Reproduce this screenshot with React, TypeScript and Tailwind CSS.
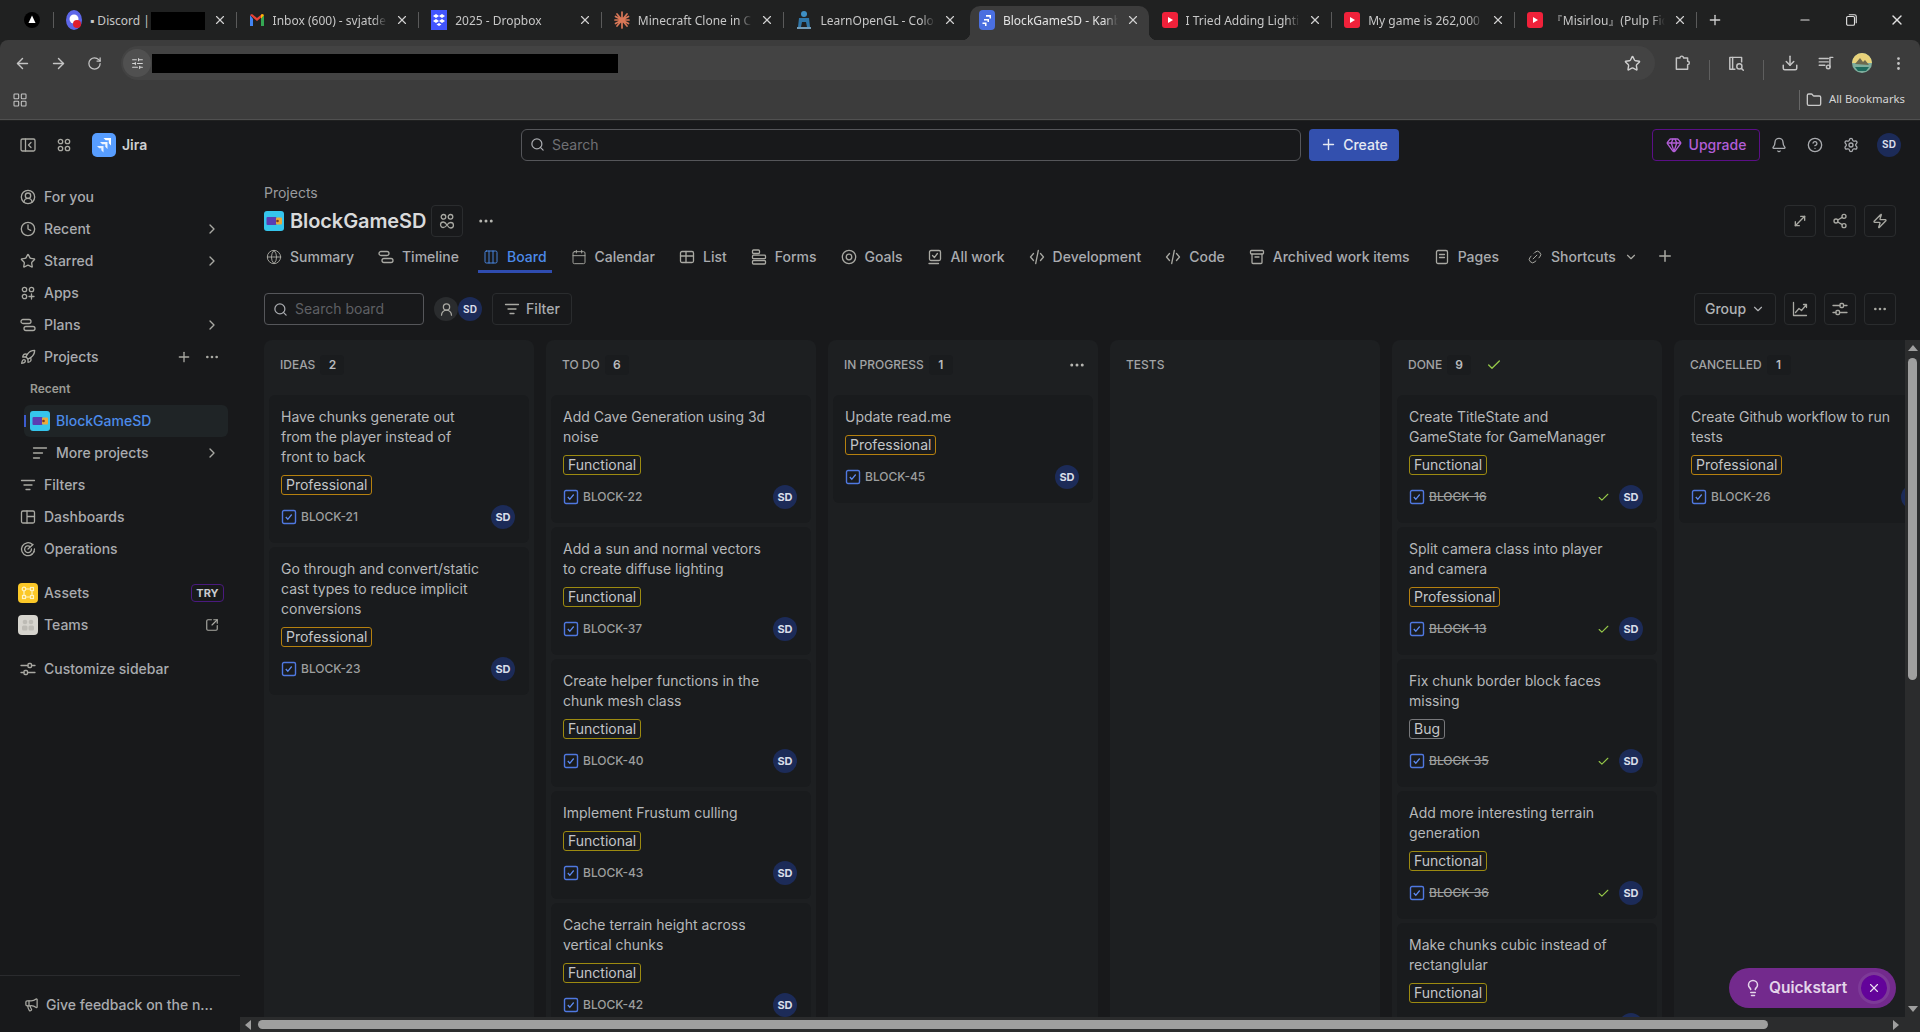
import type { ReactNode } from "react";
import {
  ArrowLeft,
  ArrowRight,
  Bell,
  Calendar,
  Check,
  ChevronDown,
  ChevronRight,
  CircleHelp,
  CircleUserRound,
  Clock,
  Columns3,
  Download,
  Ellipsis,
  EllipsisVertical,
  Folder,
  Gem,
  Globe,
  LayoutGrid,
  Lightbulb,
  Link2,
  Megaphone,
  Minus,
  MoveDiagonal,
  Plus,
  RotateCw,
  Rocket,
  Search,
  Settings,
  Share2,
  SlidersHorizontal,
  SquareArrowOutUpRight,
  Star,
  UserRound,
  X,
  Zap,
} from "lucide-react";

function Ico({ children, size = 16 }: { children: ReactNode; size?: number }) {
  return (
    <svg width={size} height={size} viewBox="0 0 16 16" fill="none" stroke="currentColor" strokeWidth="1.3" strokeLinecap="round" strokeLinejoin="round" className="shrink-0">
      {children}
    </svg>
  );
}

const PanelToggle = () => (
  <Ico>
    <rect x="1" y="2" width="14" height="12" rx="1.5" />
    <path d="M5.5 2v12M11 5.5 8.5 8l2.5 2.5" />
  </Ico>
);
const Dots4 = () => (
  <Ico>
    <circle cx="4.5" cy="4.5" r="2.2" />
    <circle cx="11.5" cy="4.5" r="2.2" />
    <circle cx="4.5" cy="11.5" r="2.2" />
    <circle cx="11.5" cy="11.5" r="2.2" />
  </Ico>
);
const AppsPlus = () => (
  <Ico>
    <circle cx="4.5" cy="4.5" r="2.2" />
    <circle cx="11.5" cy="4.5" r="2.2" />
    <circle cx="4.5" cy="11.5" r="2.2" />
    <path d="M11.5 9v5M9 11.5h5" />
  </Ico>
);
const Pills = () => (
  <Ico>
    <rect x="1" y="2.5" width="10" height="4" rx="2" />
    <rect x="4" y="9.5" width="11" height="4" rx="2" />
  </Ico>
);
const FilterLines = () => (
  <Ico>
    <path d="M1.5 3.5h13M4 8h8M6 12.5h4" />
  </Ico>
);
const MoreLines = () => (
  <Ico>
    <path d="M1.5 3h13M1.5 8h9M1.5 13h6" />
  </Ico>
);
const DashIcon = () => (
  <Ico>
    <rect x="1.5" y="2" width="13" height="12" rx="1.5" />
    <path d="M7 2v12M7 7.5h7.5" />
  </Ico>
);
const OpsIcon = () => (
  <Ico>
    <path d="M12.5 3.5A6.5 6.5 0 1 0 14.5 8" />
    <path d="M10 5.5A3.4 3.4 0 1 0 11.4 8" />
    <path d="M8 8l5-4.5" />
    <path d="M14 10.5l-.5 1M12 13l-.7.6" />
  </Ico>
);
const Tune = () => (
  <Ico>
    <path d="M1 4.5h7M12 4.5h3M1 11.5h3M8 11.5h7" />
    <rect x="8" y="2.5" width="3.5" height="4" rx="1" />
    <rect x="4" y="9.5" width="3.5" height="4" rx="1" />
  </Ico>
);
const TeamIcon = () => (
  <Ico>
    <circle cx="4.5" cy="3.8" r="2.3" />
    <circle cx="11.5" cy="3.8" r="2.3" />
    <path d="M8 12c-1-1.500-2-3-3.700-3a2.500 2.500 0 0 0 0 5.500c1.700 0 2.700-1 3.700-2.500s2-2.500 3.700-2.500a2.500 2.500 0 0 1 0 5.500c-1.700 0-2.700-1.500-3.700-3" />
  </Ico>
);
const ListIcon = () => (
  <Ico>
    <rect x="1.5" y="2.5" width="13" height="11" rx="1.5" />
    <path d="M1.5 7h13M7 2.5v11" />
  </Ico>
);
const FormsIcon = () => (
  <Ico>
    <rect x="1.5" y="1" width="7" height="3.5" rx="1" />
    <rect x="1.5" y="6.2" width="13" height="3.5" rx="1" />
    <rect x="1.5" y="11.5" width="13" height="3.5" rx="1" />
  </Ico>
);
const GoalIcon = () => (
  <Ico>
    <circle cx="8" cy="8" r="6.7" />
    <circle cx="8" cy="8" r="2.8" />
  </Ico>
);
const AllWorkIcon = () => (
  <Ico>
    <rect x="2.5" y="1.5" width="11" height="10" rx="1.5" />
    <path d="M5.5 6.5 7.4 8.5l3-4M2 14.5h9.5" />
  </Ico>
);
const CodeIcon = () => (
  <Ico>
    <path d="M4.5 4.5 1.5 8l3 3.5M11.5 4.5l3 3.5-3 3.5M9.3 1.5l-2.6 13" />
  </Ico>
);
const ArchiveIcon = () => (
  <Ico>
    <rect x="1.5" y="1.5" width="13" height="3.5" rx="1" />
    <path d="M3 5v8.5A1 1 0 0 0 4 14.5h8a1 1 0 0 0 1-1V5M6 8h4" />
  </Ico>
);
const PagesIcon = () => (
  <Ico>
    <rect x="2.5" y="1.5" width="11" height="13" rx="1.5" />
    <path d="M5.5 5.5h5M5.5 8.5h5" />
  </Ico>
);
const GrowthIcon = () => (
  <Ico>
    <path d="M1.5 1.5v13h13M3.5 11.5 7 7.5l2.5 2 5-6M11.5 3.5h3v3" />
  </Ico>
);
const ExtIcon = () => (
  <Ico size={18}>
    <path d="M3 3.5h3.2a1.6 1.6 0 0 1 3.2 0H13v3a1.5 1.5 0 0 1 0 3v4H3z" />
  </Ico>
);
const SidePanelIcon = () => (
  <Ico size={18}>
    <path d="M13 7V3H2.5v10.5H7" />
    <path d="M5 3v10.5" />
    <circle cx="11" cy="11" r="2.3" />
    <path d="m13 13 1.5 1.5" />
  </Ico>
);
const MusicIcon = () => (
  <Ico size={18}>
    <path d="M2 4h8M2 7h8M2 10h5M14 3h-2.5v8.5" />
    <circle cx="10" cy="11.5" r="1.6" />
  </Ico>
);
const RestoreIcon = () => (
  <Ico size={14}>
    <rect x="3" y="4" width="9" height="10" rx="1.5" />
    <path d="M6 2h6a2 2 0 0 1 2 2v7" />
  </Ico>
);

function JiraMark({ size = 24 }: { size?: number }) {
  return (
    <svg width={size} height={size} viewBox="0 0 24 24" className="shrink-0">
      <rect width="24" height="24" rx="5" fill="#579dff" />
      <path d="M11.500 5H19v7.500L16.800 10.300V7.200H13.700z" fill="#fff" />
      <path d="M8 9h7.500v7l-2.200-2.200v-2.600h-3.100z" fill="#fff" fillOpacity="0.9" />
      <path d="M5 13h6.500v6.500L9.300 17.300v-2.100H7.200z" fill="#fff" fillOpacity="0.85" />
    </svg>
  );
}

function ProjectMark({ size = 20 }: { size?: number }) {
  return (
    <svg width={size} height={size} viewBox="0 0 20 20" className="shrink-0">
      <rect width="20" height="20" rx="3" fill="#35c5ec" />
      <rect x="2.5" y="6" width="10" height="8" rx="1" fill="#5a3db3" />
      <rect x="12" y="6.5" width="6" height="7" rx="1" fill="#e9a93c" />
      <circle cx="13.5" cy="10" r="1.3" fill="#7a3b20" />
    </svg>
  );
}

function YouTubeFav() {
  return (
    <svg width="16" height="16" viewBox="0 0 16 16" className="shrink-0">
      <rect width="16" height="16" rx="3" fill="#f0213a" />
      <path d="M6 5l5 3-5 3z" fill="#fff" />
    </svg>
  );
}

const favs: Record<string, ReactNode> = {
  discord: (
    <svg width="16" height="20" viewBox="0 0 16 20" className="shrink-0">
      <ellipse cx="8" cy="10" rx="8" ry="10" fill="#5d67e8" />
      <circle cx="8" cy="9" r="4.5" fill="#fff" />
      <circle cx="11" cy="14" r="4" fill="#e01e2e" />
    </svg>
  ),
  gmail: (
    <svg width="16" height="16" viewBox="0 0 16 16" className="shrink-0">
      <path d="M1 3v11h3V7z" fill="#4285f4" />
      <path d="M15 3v11h-3V7z" fill="#34a853" />
      <path d="M1 3l7 6 7-6-2-1-5 4-5-4z" fill="#ea4335" />
      <path d="M12 7l3-4-2-1-1 1z" fill="#fbbc04" />
    </svg>
  ),
  dropbox: (
    <svg width="16" height="20" viewBox="0 0 16 20" className="shrink-0">
      <rect width="16" height="20" fill="#4255ff" />
      <path d="M5 4l3 2-3 2-3-2zM11 4l3 2-3 2-3-2zM5 9l3 2-3 2-3-2zM11 9l3 2-3 2-3-2zM8 13l2.5 1.6L8 16l-2.500-1.400z" fill="#fff" />
    </svg>
  ),
  claude: (
    <svg width="16" height="20" viewBox="0 0 16 20" className="shrink-0" stroke="#d97757" strokeWidth="1.7" strokeLinecap="round">
      <path d="M8 2v16M1 10h14M3 4l10 12M13 4 3 16M1.500 6.500l13 7M14.500 6.500l-13 7" />
    </svg>
  ),
  opengl: (
    <svg width="16" height="20" viewBox="0 0 16 20" className="shrink-0">
      <circle cx="8" cy="4" r="3" fill="#3e8fc4" />
      <path d="M3 8h10l1 9h-3l-1-5H6l-1 5H2z" fill="#2f76a8" />
      <path d="M1 18h14" stroke="#8fc5e8" strokeWidth="1.500" />
    </svg>
  ),
  jira: (
    <svg width="16" height="20" viewBox="0 0 16 20" className="shrink-0">
      <rect width="16" height="20" rx="4" fill="#4a6fe0" />
      <path d="M7 5h5v3.500h-1.500V6.800H7zM5 9h5v3H8.500v-1.500H5zM3.500 12.500H7.500V16H6v-2H3.500z" fill="#fff" />
    </svg>
  ),
  yt: <YouTubeFav />,
};

type TabData = { id: string; fav: string; title: string; redact?: boolean; active?: boolean };

const tabs: TabData[] = [
  { id: "discord", fav: "discord", title: "▪ Discord |", redact: true },
  { id: "gmail", fav: "gmail", title: "Inbox (600) - svjatden" },
  { id: "dropbox", fav: "dropbox", title: "2025 - Dropbox" },
  { id: "mc", fav: "claude", title: "Minecraft Clone in C+" },
  { id: "gl", fav: "opengl", title: "LearnOpenGL - Colors" },
  { id: "jira", fav: "jira", title: "BlockGameSD - Kanba", active: true },
  { id: "light", fav: "yt", title: "I Tried Adding Lighting" },
  { id: "big", fav: "yt", title: "My game is 262,000 ti" },
  { id: "mis", fav: "yt", title: "『Misirlou』(Pulp Fiction" },
];

function BrowserTab({ tab, index }: { tab: TabData; index: number }) {
  const hideSep = tab.active || tabs[index + 1]?.active;
  return (
    <div className="relative flex h-10 w-[182.6px] shrink-0 items-center pl-3 pr-[10px]">
      {tab.active && (
        <div className="absolute inset-y-0 left-[3px] right-[1px] top-[6px] rounded-t-[10px] bg-[#3c3c3c]">
          <div className="absolute bottom-0 left-[-8px] size-2 bg-[radial-gradient(circle_at_0_0,transparent_8px,#3c3c3c_8.5px)]" />
          <div className="absolute bottom-0 right-[-8px] size-2 bg-[radial-gradient(circle_at_100%_0,transparent_8px,#3c3c3c_8.5px)]" />
        </div>
      )}
      <div className="relative flex w-full items-center gap-2">
        <span className="flex size-4 items-center justify-center">{favs[tab.fav]}</span>
        {tab.redact ? (
          <span className="flex min-w-0 flex-1 items-center overflow-hidden whitespace-nowrap pt-[2px] text-xs text-[#c7c7c7]">
            {tab.title}
            <span className="ml-px h-[18px] w-[60px] shrink-0 bg-black" />
          </span>
        ) : (
          <span className={`min-w-0 flex-1 overflow-hidden whitespace-nowrap pt-[2px] text-xs [mask-image:linear-gradient(to_right,black_88%,transparent)] ${tab.active ? "text-[#e3e3e3]" : "text-[#c7c7c7]"}`}>
            {tab.title}
          </span>
        )}
        <X size={14} strokeWidth={2} className="shrink-0 text-[#d0d0d0]" />
      </div>
      {!hideSep && <div className="absolute right-0 top-3 h-4 w-px bg-[#5a5a5a]" />}
    </div>
  );
}

function BrowserChrome() {
  const btn = "flex h-[34px] w-9 shrink-0 items-center justify-center text-[#c4c4c4]";
  const sep = <div className="ml-[9px] mr-2 h-5 w-px bg-[#5f5f5f]" />;
  return (
    <div className="h-[121px] shrink-0 bg-[#202121] [font-family:'Noto_Sans',sans-serif]">
      <div className="flex h-10 items-center">
        <div className="relative flex h-10 w-[54px] shrink-0 items-center justify-center pl-[10px]">
          <svg width="16" height="16" viewBox="0 0 16 16">
            <circle cx="8" cy="8" r="8" fill="#000" />
            <path d="M8 3.500 11.500 11h-7z" fill="#fff" />
          </svg>
          <div className="absolute right-0 top-3 h-4 w-px bg-[#5a5a5a]" />
        </div>
        {tabs.map((t, i) => (
          <BrowserTab key={t.id} tab={t} index={i} />
        ))}
        <Plus size={16} className="ml-[10px] text-[#d0d0d0]" />
        <div className="ml-auto flex items-center">
          <div className="flex w-[46px] justify-center text-[#e0e0e0]"><Minus size={14} /></div>
          <div className="flex w-[46px] justify-center text-[#e0e0e0]"><RestoreIcon /></div>
          <div className="flex w-[46px] justify-center text-[#e0e0e0]"><X size={16} /></div>
        </div>
      </div>
      <div className="h-20 rounded-tl-lg rounded-tr-lg border-b border-[#505050] bg-[#3c3c3c]">
        <div className="flex h-10 items-end pl-1">
          <div className={btn}><ArrowLeft size={17} /></div>
          <div className={btn}><ArrowRight size={17} /></div>
          <div className={btn}><RotateCw size={15} /></div>
          <div className="ml-[9px] flex h-[34px] w-[1534px] shrink-0 items-center rounded-full bg-[#434343] pl-[2px] pr-[14px]">
            <div className="flex size-[28px] items-center justify-center rounded-full bg-[#505050] text-[#d5d5d5]">
              <SlidersHorizontal size={13} />
            </div>
            <div className="ml-[1px] h-[19px] w-[466px] bg-black" />
            <Star size={17} className="ml-auto text-[#cfcfcf]" />
          </div>
          <div className={`${btn} ml-[9px]`}><ExtIcon /></div>
          {sep}
          <div className={btn}><SidePanelIcon /></div>
          {sep}
          <div className={btn}><Download size={18} /></div>
          <div className={btn}><MusicIcon /></div>
          <div className={btn}>
            <svg width="20" height="20" viewBox="0 0 20 20">
              <circle cx="10" cy="10" r="10" fill="#7fae9d" />
              <path d="M0 10a10 10 0 0 1 20 0z" fill="#e8d27a" />
              <path d="M3 11l5-6 3 4 2-2 4 5z" fill="#6d6a4f" />
              <path d="M3 14h14l-3 4H6z" fill="#1f6b5d" />
            </svg>
          </div>
          <div className={btn}><EllipsisVertical size={17} /></div>
        </div>
        <div className="flex h-[39px] items-center pl-3 pr-[15px]">
          <LayoutGrid size={16} strokeWidth={1.6} className="text-[#c4c4c4]" />
          <div className="ml-auto h-5 w-px bg-[#666]" />
          <Folder size={16} className="ml-[6px] text-[#c9c9c9]" />
          <span className="ml-[7px] text-[11.3px] text-[#d5d5d5]">All Bookmarks</span>
        </div>
      </div>
    </div>
  );
}

function Avatar({ small }: { small?: boolean }) {
  return (
    <div className={`flex size-6 shrink-0 items-center justify-center rounded-full bg-[#1c2b58] font-bold text-[#d8dde8] ${small ? "text-[10px]" : "text-[11px]"}`}>
      SD
    </div>
  );
}

function TopBar() {
  const icon = "flex w-9 justify-center text-[#a9abaf]";
  return (
    <div className="flex h-[47px] shrink-0 items-center pr-[19px]">
      <div className="flex w-[521px] shrink-0 items-center pl-5 text-[#a9a9a3]">
        <PanelToggle />
        <div className="ml-5"><Dots4 /></div>
        <div className="ml-5"><JiraMark /></div>
        <span className="ml-[6px] pt-px text-sm font-semibold text-[#cfd0d2]">Jira</span>
      </div>
      <div className="flex h-8 w-[780px] items-center gap-[7px] rounded-md border border-[#55565a] pl-2 text-sm text-[#6f7074]">
        <Search size={15} className="text-[#a9abaf]" />
        Search
      </div>
      <div className="ml-2 flex h-8 w-[90px] items-center justify-center gap-[6px] rounded bg-[#3350ae] text-sm font-medium text-[#e6e9f2]">
        <Plus size={17} />
        Create
      </div>
      <div className="ml-auto flex h-8 w-[108px] items-center justify-center gap-[7px] rounded border border-[#5b0f87] text-sm font-medium text-[#b25ed8]">
        <Gem size={16} />
        Upgrade
      </div>
      <div className={`${icon} ml-px`}><Bell size={16} /></div>
      <div className={icon}><CircleHelp size={16} /></div>
      <div className={icon}><Settings size={16} /></div>
      <div className="ml-2"><Avatar small /></div>
    </div>
  );
}

function NavRow({ icon, label, chevron, right }: { icon: ReactNode; label: string; chevron?: boolean; right?: ReactNode }) {
  return (
    <div className="flex h-8 items-center gap-2 pl-5 pr-5 text-[#a9a9a3]">
      <span className="flex size-4 shrink-0 items-center justify-center">{icon}</span>
      <span className="text-sm font-medium text-[#a9abaf]">{label}</span>
      {chevron && <ChevronRight size={16} className="ml-auto" />}
      {right}
    </div>
  );
}

function AppTile({ bg, children }: { bg: string; children: ReactNode }) {
  return (
    <span className={`ml-[-2px] mr-[-2px] flex size-5 shrink-0 items-center justify-center rounded ${bg}`}>
      {children}
    </span>
  );
}

function Sidebar() {
  return (
    <div className="flex w-[240px] shrink-0 flex-col pt-[13px]">
      <NavRow icon={<CircleUserRound size={16} />} label="For you" />
      <NavRow icon={<Clock size={16} />} label="Recent" chevron />
      <NavRow icon={<Star size={16} />} label="Starred" chevron />
      <NavRow icon={<AppsPlus />} label="Apps" />
      <NavRow icon={<Pills />} label="Plans" chevron />
      <NavRow
        icon={<Rocket size={16} />}
        label="Projects"
        right={
          <div className="ml-auto flex items-center gap-3">
            <Plus size={16} />
            <Ellipsis size={16} />
          </div>
        }
      />
      <div className="flex h-8 items-center pl-[30px] text-xs font-semibold text-[#9a9a94]">Recent</div>
      <div className="relative ml-6 mr-3 flex h-8 items-center gap-[6px] rounded-md bg-[#1f2426] pl-[6px]">
        <div className="absolute left-0 top-[10px] h-3 w-[2px] bg-[#3d5ccf]" />
        <ProjectMark />
        <span className="text-sm font-medium text-[#4c8bea]">BlockGameSD</span>
      </div>
      <div className="flex h-8 items-center gap-2 pl-8 pr-5 text-[#a9a9a3]">
        <MoreLines />
        <span className="text-sm font-medium text-[#a9abaf]">More projects</span>
        <ChevronRight size={16} className="ml-auto" />
      </div>
      <NavRow icon={<FilterLines />} label="Filters" />
      <NavRow icon={<DashIcon />} label="Dashboards" />
      <NavRow icon={<OpsIcon />} label="Operations" />
      <div className="mt-3">
        <NavRow
          icon={
            <AppTile bg="bg-[#fbc828]">
              <svg width="14" height="14" viewBox="0 0 14 14" fill="none" stroke="#fff3c4" strokeWidth="1.200">
                <circle cx="3" cy="3" r="1.800" />
                <rect x="9.500" y="1.500" width="3" height="3" />
                <rect x="1.500" y="9.500" width="3" height="3" />
                <rect x="9.500" y="9.500" width="3" height="3" />
                <path d="M5 3h4M3 5v4M5 11h4M11 5v4" />
              </svg>
            </AppTile>
          }
          label="Assets"
          right={<span className="ml-auto mr-[-4px] flex h-[18px] w-[33px] items-center justify-center rounded-sm border border-[#4a1a7e] text-[11px] font-bold text-[#c9cbd0]">TRY</span>}
        />
        <NavRow
          icon={
            <AppTile bg="bg-[#d6d4ce]">
              <svg width="14" height="14" viewBox="0 0 14 14" fill="#bdbbb5">
                <circle cx="4" cy="4" r="2.300" />
                <circle cx="10" cy="4" r="2.300" />
                <rect x="1" y="7.500" width="5.500" height="5" rx="1.500" />
                <rect x="7.500" y="7.500" width="5.500" height="5" rx="1.500" />
              </svg>
            </AppTile>
          }
          label="Teams"
          right={<SquareArrowOutUpRight size={14} className="ml-auto mr-px" />}
        />
      </div>
      <div className="mt-3">
        <NavRow icon={<Tune />} label="Customize sidebar" />
      </div>
      <div className="mt-auto flex h-[57px] items-center gap-[7px] border-t border-[#2a2b2e] pl-6 pt-[1px] text-[#a9a9a3]">
        <Megaphone size={15} />
        <span className="text-sm font-medium text-[#a9abaf]">Give feedback on the n...</span>
      </div>
    </div>
  );
}

const navTabs: { label: string; icon: ReactNode; active?: boolean; chevron?: boolean }[] = [
  { label: "Summary", icon: <Globe size={16} strokeWidth={1.4} /> },
  { label: "Timeline", icon: <Pills /> },
  { label: "Board", icon: <Columns3 size={16} strokeWidth={1.4} />, active: true },
  { label: "Calendar", icon: <Calendar size={16} strokeWidth={1.4} /> },
  { label: "List", icon: <ListIcon /> },
  { label: "Forms", icon: <FormsIcon /> },
  { label: "Goals", icon: <GoalIcon /> },
  { label: "All work", icon: <AllWorkIcon /> },
  { label: "Development", icon: <CodeIcon /> },
  { label: "Code", icon: <CodeIcon /> },
  { label: "Archived work items", icon: <ArchiveIcon /> },
  { label: "Pages", icon: <PagesIcon /> },
  { label: "Shortcuts", icon: <Link2 size={16} strokeWidth={1.4} className="-rotate-45" />, chevron: true },
];

function SquareBtn({ children }: { children: ReactNode }) {
  return (
    <div className="flex size-8 items-center justify-center rounded border border-[#2a2c2e] text-[#a9a9a3]">{children}</div>
  );
}

function ProjectHeader() {
  return (
    <div className="shrink-0 pl-6 pr-6 pt-[15px]">
      <div className="h-5 text-sm leading-5 text-[#9a9b9e]">Projects</div>
      <div className="mt-[2px] flex h-8 items-center">
        <ProjectMark />
        <span className="ml-[6px] text-xl font-semibold tracking-[-0.1px] text-[#d9dadb]">BlockGameSD</span>
        <div className="ml-[5px] flex size-8 items-center justify-center rounded border border-[#2a2c2e] text-[#a9a9a3]">
          <TeamIcon />
        </div>
        <Ellipsis size={18} className="ml-[14px] text-[#b5b5b0]" />
        <div className="ml-auto flex gap-2">
          <SquareBtn><MoveDiagonal size={16} /></SquareBtn>
          <SquareBtn><Share2 size={16} /></SquareBtn>
          <SquareBtn><Zap size={16} /></SquareBtn>
        </div>
      </div>
      <div className="-ml-[3px] mt-1 flex h-8 items-start gap-[14px]">
        {navTabs.map((t) => (
          <div key={t.label} className={`flex h-8 items-center gap-2 px-[5px] pt-[2px] ${t.chevron ? "ml-1" : ""} ${t.active ? "border-b-[3px] border-[#2f4cb0] text-[#4c8bea]" : "border-b-[3px] border-transparent text-[#a9a9a3]"}`}>
            {t.icon}
            <span className={`whitespace-nowrap text-sm font-medium ${t.active ? "text-[#4c8bea]" : "text-[#a9abaf]"}`}>{t.label}</span>
            {t.chevron && <ChevronDown size={14} />}
          </div>
        ))}
        <Plus size={18} className="ml-[-1px] mt-[6px] text-[#a9a9a3]" />
      </div>
      <div className="mt-5 flex h-8 items-center">
        <div className="flex h-8 w-[160px] items-center gap-[7px] rounded border border-[#55565a] pl-2 text-sm text-[#5f6064]">
          <Search size={15} className="text-[#a9abaf]" />
          Search board
        </div>
        <div className="ml-[10px] flex size-6 items-center justify-center rounded-full bg-[#2a2c2e] text-[#a9a9a3]">
          <UserRound size={15} />
        </div>
        <Avatar small />
        <div className="ml-[10px] flex h-8 w-[80px] items-center justify-center gap-[6px] rounded border border-[#2a2c2e] text-sm font-medium text-[#a9abaf]">
          <span className="text-[#a9a9a3]"><FilterLines /></span>
          Filter
        </div>
        <div className="ml-auto flex gap-2">
          <div className="flex h-8 w-[82px] items-center justify-center gap-[5px] rounded border border-[#2a2c2e] text-sm font-medium text-[#b0b2b5]">
            Group
            <ChevronDown size={14} />
          </div>
          <SquareBtn><GrowthIcon /></SquareBtn>
          <SquareBtn><Tune /></SquareBtn>
          <SquareBtn><Ellipsis size={16} /></SquareBtn>
        </div>
      </div>
    </div>
  );
}

type CardData = { title: string; label: "Professional" | "Functional" | "Bug"; id: string; done?: boolean };

const labelCls = {
  Professional: "border-[#b5800f]",
  Functional: "border-[#9c8a10]",
  Bug: "border-[#77787b]",
};

function IssueCard({ card }: { card: CardData }) {
  return (
    <div className="shrink-0 rounded-md bg-[#191b1d] pb-[14px] pl-3 pr-[14px] pt-3">
      <div className="pr-[30px] text-sm leading-5 text-[#b6b8ba]">{card.title}</div>
      <span className={`mt-2 block h-5 w-fit rounded-[3px] border px-[4px] text-sm leading-[18px] text-[#c4c6c8] ${labelCls[card.label]}`}>
        {card.label}
      </span>
      <div className="mt-[10px] flex h-6 items-center">
        <svg width="16" height="16" viewBox="0 0 16 16" fill="none" className="shrink-0">
          <rect x="1.500" y="1.500" width="13" height="13" rx="1.500" stroke="#4f78e0" strokeWidth="1.400" />
          <path d="M4.800 8l2 2.300 3.900-4.800" stroke="#5d8af0" strokeWidth="1.300" />
        </svg>
        <span className={`ml-1 text-xs font-medium text-[#9d9f9f] ${card.done ? "line-through" : ""}`}>{card.id}</span>
        {card.done && <Check size={13} strokeWidth={2} className="ml-auto mr-[9px] text-[#94c748]" />}
        <div className={card.done ? "" : "ml-auto"}><Avatar /></div>
      </div>
    </div>
  );
}

type ColumnData = { name: string; count?: number; check?: boolean; menu?: boolean; cards: CardData[] };

const columns: ColumnData[] = [
  {
    name: "IDEAS",
    count: 2,
    cards: [
      { title: "Have chunks generate out from the player instead of front to back", label: "Professional", id: "BLOCK-21" },
      { title: "Go through and convert/static cast types to reduce implicit conversions", label: "Professional", id: "BLOCK-23" },
    ],
  },
  {
    name: "TO DO",
    count: 6,
    cards: [
      { title: "Add Cave Generation using 3d noise", label: "Functional", id: "BLOCK-22" },
      { title: "Add a sun and normal vectors to create diffuse lighting", label: "Functional", id: "BLOCK-37" },
      { title: "Create helper functions in the chunk mesh class", label: "Functional", id: "BLOCK-40" },
      { title: "Implement Frustum culling", label: "Functional", id: "BLOCK-43" },
      { title: "Cache terrain height across vertical chunks", label: "Functional", id: "BLOCK-42" },
    ],
  },
  {
    name: "IN PROGRESS",
    count: 1,
    menu: true,
    cards: [{ title: "Update read.me", label: "Professional", id: "BLOCK-45" }],
  },
  { name: "TESTS", cards: [] },
  {
    name: "DONE",
    count: 9,
    check: true,
    cards: [
      { title: "Create TitleState and GameState for GameManager", label: "Functional", id: "BLOCK-16", done: true },
      { title: "Split camera class into player and camera", label: "Professional", id: "BLOCK-13", done: true },
      { title: "Fix chunk border block faces missing", label: "Bug", id: "BLOCK-35", done: true },
      { title: "Add more interesting terrain generation", label: "Functional", id: "BLOCK-36", done: true },
      { title: "Make chunks cubic instead of rectanglular", label: "Functional", id: "BLOCK-38", done: true },
    ],
  },
  {
    name: "CANCELLED",
    count: 1,
    cards: [{ title: "Create Github workflow to run tests", label: "Professional", id: "BLOCK-26" }],
  },
];

function BoardColumn({ col }: { col: ColumnData }) {
  return (
    <div className="flex h-full w-[270px] shrink-0 flex-col overflow-hidden rounded-t-lg bg-[#1d1f21]">
      <div className="flex h-[55px] shrink-0 items-center pb-[5px] pl-4 pr-3">
        <span className="text-xs font-medium text-[#a1a3a5]">{col.name}</span>
        {col.count !== undefined && (
          <span className="ml-[5px] flex h-5 w-6 items-center justify-center rounded bg-[#1a1c1e] text-xs font-semibold text-[#b9bbbd]">{col.count}</span>
        )}
        {col.check && <Check size={16} strokeWidth={2} className="ml-[15px] text-[#94c748]" />}
        {col.menu && <Ellipsis size={18} className="ml-auto text-[#b5b5b0]" />}
      </div>
      <div className="flex flex-col gap-1 px-[5px]">
        {col.cards.map((c) => (
          <IssueCard key={c.id} card={c} />
        ))}
      </div>
    </div>
  );
}

function VScrollbar() {
  return (
    <div className="flex w-[15px] shrink-0 flex-col items-center bg-[#2b2c2d]">
      <div className="mt-[5px] size-0 border-x-[5px] border-b-[6px] border-x-transparent border-b-[#9f9f9f]" />
      <div className="mt-[7px] h-[322px] w-[9px] rounded-full bg-[#9f9f9f]" />
      <div className="mb-[5px] mt-auto size-0 border-x-[5px] border-t-[6px] border-x-transparent border-t-[#9f9f9f]" />
    </div>
  );
}

function HScrollbar() {
  return (
    <div className="flex h-[15px] shrink-0 items-center bg-[#2b2c2d] pl-[5px]">
      <div className="size-0 border-y-[5px] border-r-[6px] border-y-transparent border-r-[#9f9f9f]" />
      <div className="ml-[7px] h-[9px] w-[1510px] rounded-full bg-[#9f9f9f]" />
      <div className="ml-[125px] size-0 border-y-[5px] border-l-[6px] border-y-transparent border-l-[#9f9f9f]" />
    </div>
  );
}

function Quickstart() {
  return (
    <div className="absolute bottom-[24px] right-[24px] flex h-10 w-[167px] items-center rounded-full bg-[#732a8d] pl-[15px]">
      <Lightbulb size={18} className="text-[#e4d5ea]" />
      <span className="ml-[7px] text-[15.5px] font-semibold text-[#e4d5ea]">Quickstart</span>
      <div className="ml-auto mr-[9px] flex size-[26px] items-center justify-center rounded-full bg-[#63039a] outline-[3px] outline-[#7d3a98]">
        <X size={14} className="text-[#eadff0]" />
      </div>
    </div>
  );
}

export default function App() {
  return (
    <div className="relative flex h-[1032px] w-[1920px] flex-col overflow-hidden bg-[#18191b] [font-family:Inter,sans-serif]">
      <BrowserChrome />
      <TopBar />
      <div className="flex min-h-0 flex-1">
        <Sidebar />
        <div className="flex min-w-0 flex-1 flex-col">
          <ProjectHeader />
          <div className="mt-[15px] flex min-h-0 flex-1">
            <div className="flex min-w-0 flex-1 gap-3 overflow-hidden pl-6">
              {columns.map((c) => (
                <BoardColumn key={c.name} col={c} />
              ))}
            </div>
            <VScrollbar />
          </div>
          <HScrollbar />
        </div>
      </div>
      <Quickstart />
    </div>
  );
}
